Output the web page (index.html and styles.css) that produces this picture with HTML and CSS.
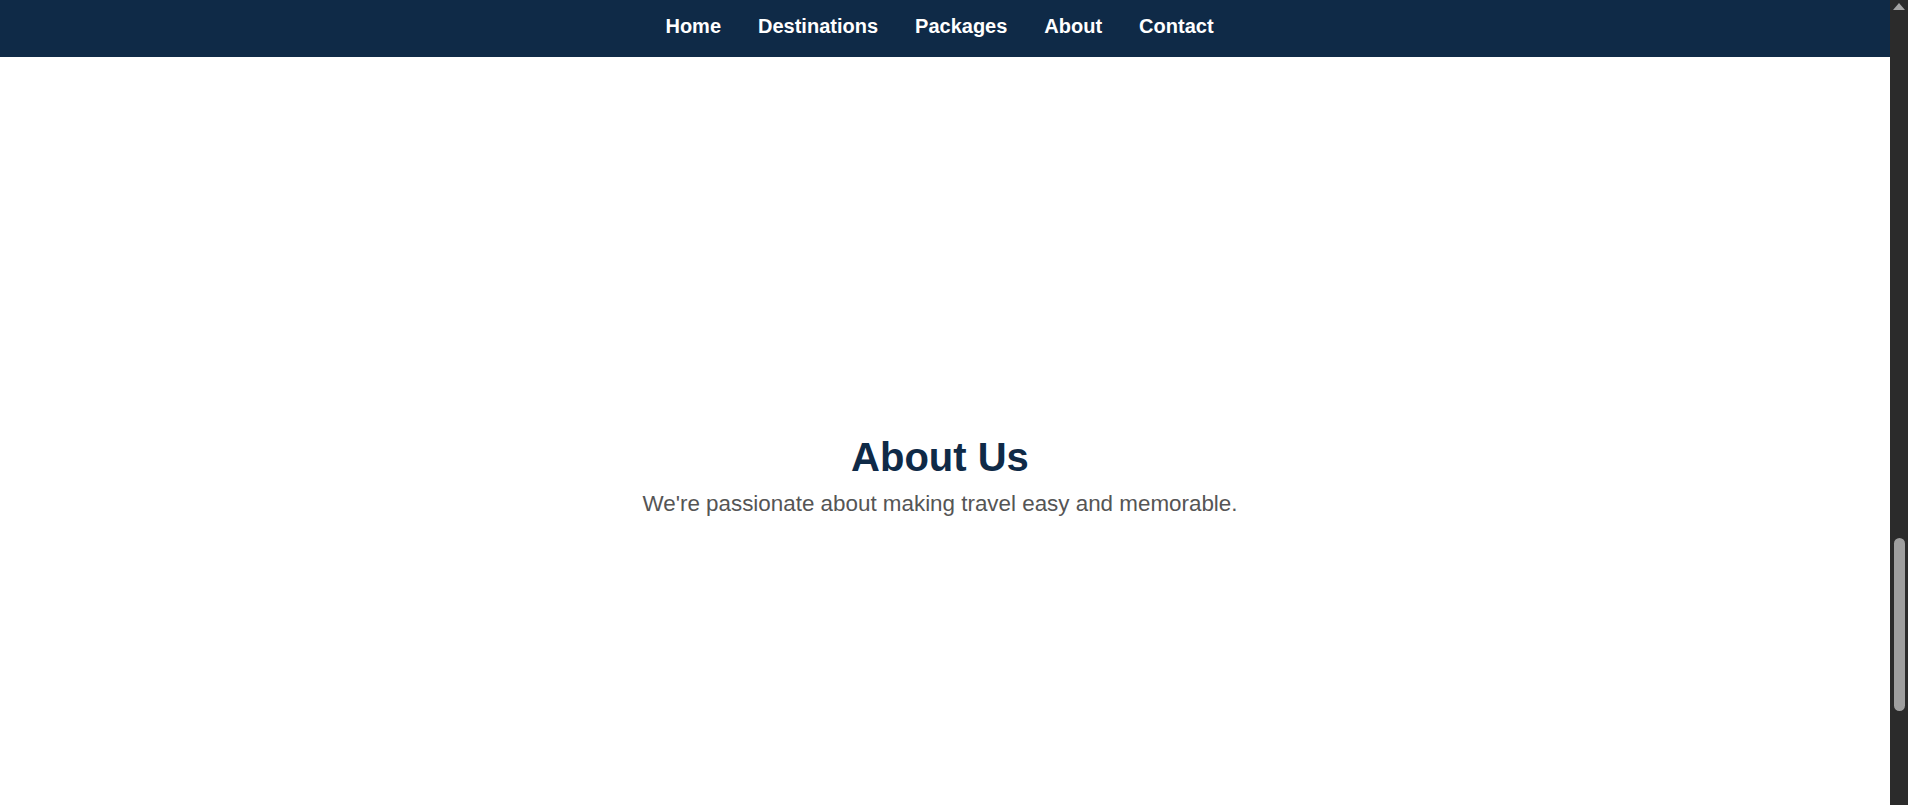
FILE: index.html
```html
<!DOCTYPE html>
<html lang="en">
<head>
<meta charset="utf-8">
<title>Travel - About Us</title>
<link rel="stylesheet" href="styles.css">
</head>
<body>
  <div class="window">
    <div class="page">
      <nav class="navbar">
        <ul class="nav-list">
          <li><a href="#home">Home</a></li>
          <li><a href="#destinations">Destinations</a></li>
          <li><a href="#packages">Packages</a></li>
          <li><a href="#about">About</a></li>
          <li><a href="#contact">Contact</a></li>
        </ul>
      </nav>
      <section class="about" id="about">
        <h1 class="about-title">About Us</h1>
        <p class="about-text">We're passionate about making travel easy and memorable.</p>
      </section>
    </div>
    <div class="scrollbar" aria-hidden="true">
      <div class="scroll-arrow"></div>
      <div class="scroll-thumb"></div>
    </div>
  </div>
</body>
</html>
```
FILE: styles.css
```css
html, body {
  margin: 0;
  padding: 0;
  height: 100%;
  overflow: hidden;
  background: #ffffff;
}

body {
  font-family: "Liberation Sans", Arial, Helvetica, sans-serif;
}

.window {
  display: flex;
  height: 100vh;
}

.page {
  flex: 1;
  display: flex;
  flex-direction: column;
  background: #ffffff;
}

.navbar {
  height: 57px;
  box-sizing: border-box;
  padding: 15px 11px 0 0;
  background: #0f2a47;
}

.nav-list {
  list-style: none;
  margin: 0;
  padding: 0;
  display: flex;
  justify-content: center;
  gap: 37px;
}

.nav-list a {
  color: #ffffff;
  text-decoration: none;
  font-weight: bold;
  font-size: 20px;
  line-height: 23px;
}

.about {
  flex: 1;
  padding: 377px 10px 0 0;
  text-align: center;
}

.about-title {
  margin: 0 0 11px;
  font-size: 40px;
  line-height: 46px;
  font-weight: bold;
  color: #0f2a47;
}

.about-text {
  margin: 0;
  font-size: 22.4px;
  line-height: 26px;
  color: #555555;
}

.scrollbar {
  width: 18px;
  flex: none;
  background: #2b2b2b;
  display: flex;
  flex-direction: column;
  align-items: center;
}

.scroll-arrow {
  margin-top: 3px;
  width: 0;
  height: 0;
  border-left: 6.5px solid transparent;
  border-right: 6.5px solid transparent;
  border-bottom: 7px solid #a3a3a3;
}

.scroll-thumb {
  margin-top: 528px;
  width: 11px;
  height: 173px;
  border-radius: 6px;
  background: #9f9f9f;
}
```
